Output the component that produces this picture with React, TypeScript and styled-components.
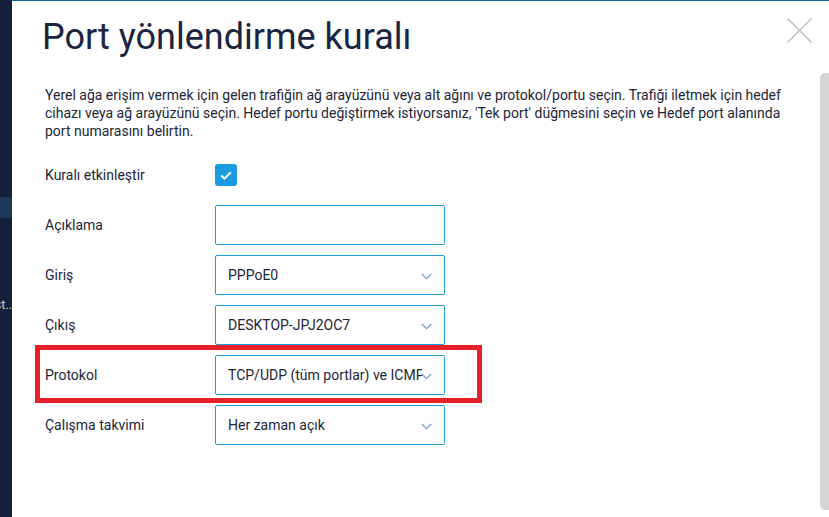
import React from 'react'
import styled, { createGlobalStyle } from 'styled-components'

const GlobalStyle = createGlobalStyle`
  html, body {
    margin: 0;
    padding: 0;
    background: #ffffff;
  }
  body {
    font-family: Roboto, 'Noto Sans', Arial, sans-serif;
    color: #1d2538;
  }
`

const Page = styled.div`
  display: flex;
  width: 829px;
  height: 517px;
  overflow: hidden;
`

const SideNav = styled.div`
  width: 12px;
  flex-shrink: 0;
  background: #14203a;
  display: flex;
  flex-direction: column;
  padding-top: 197px;
  box-sizing: border-box;
`

const NavActive = styled.div`
  height: 21px;
  background: #1b3858;
`

const NavText = styled.div`
  margin-top: 79px;
  display: flex;
  justify-content: flex-end;
  overflow: hidden;
  font-size: 12.5px;
  line-height: 16px;
  color: #cfd4dc;
  white-space: nowrap;
`

const Modal = styled.div`
  position: relative;
  flex: 1;
  display: flex;
  background: #ffffff;
  border-top: 1px solid #0b6a9c;
`

const Content = styled.div`
  flex: 1;
  padding: 13px 0 0 33px;
`

const Title = styled.h1`
  margin: 0 0 25px -3px;
  font-size: 36px;
  line-height: 47px;
  font-weight: 400;
  color: #1a2640;
`

const Intro = styled.p`
  margin: 0 0 15px;
  font-size: 14px;
  line-height: 18px;
  color: #1d2538;
`

const Form = styled.div`
  display: flex;
  flex-direction: column;
  gap: 10px;
`

const Row = styled.div`
  display: flex;
  align-items: center;
  height: 40px;
`

const Label = styled.div`
  width: 170px;
  font-size: 14px;
  color: #1d2538;
`

const Checkbox = styled.div`
  width: 22px;
  height: 22px;
  border-radius: 3px;
  background: #1a9be0;
  display: flex;
  align-items: center;
  justify-content: center;
`

const Field = styled.div`
  position: relative;
  width: 230px;
  height: 40px;
  box-sizing: border-box;
  border: 1px solid #1a9be0;
  border-radius: 2px;
  display: flex;
  align-items: center;
  padding: 0 0 0 12px;
  font-size: 14px;
  color: #1d2538;
  overflow: hidden;
  white-space: nowrap;
`

const FieldValue = styled.span`
  display: block;
  width: 194px;
  overflow: hidden;
`

const Chevron = styled.svg`
  position: absolute;
  right: 12px;
  top: 17px;
`

const CloseButton = styled.div`
  position: absolute;
  top: 17px;
  right: 17px;
  width: 25px;
  height: 25px;
`

const Highlight = styled.div`
  position: absolute;
  left: 23px;
  top: 344px;
  width: 447px;
  height: 58px;
  box-sizing: border-box;
  border: 5px solid #e8202a;
  pointer-events: none;
`

const ScrollTrack = styled.div`
  width: 9px;
  flex-shrink: 0;
  padding-top: 72px;
`

const ScrollThumb = styled.div`
  height: 437px;
  background: #d5d5d5;
  border-radius: 5px 0 0 5px;
`

function Select ({ value }: { value: string }) {
  return (
    <Field>
      <FieldValue>{value}</FieldValue>
      <Chevron width="11" height="7" viewBox="0 0 11 7">
        <path d="M0.8 1 L5.5 5.6 L10.2 1" fill="none" stroke="#7b9bd2" strokeWidth="1.3" />
      </Chevron>
    </Field>
  )
}

const rows = [
  { label: 'Giriş', value: 'PPPoE0' },
  { label: 'Çıkış', value: 'DESKTOP-JPJ2OC7' },
  { label: 'Protokol', value: 'TCP/UDP (tüm portlar) ve ICMP' },
  { label: 'Çalışma takvimi', value: 'Her zaman açık' }
]

export default function App () {
  return (
    <Page>
      <GlobalStyle />
      <SideNav>
        <NavActive />
        <NavText><span>Test..</span></NavText>
      </SideNav>
      <Modal>
        <Content>
          <Title>Port yönlendirme kuralı</Title>
          <Intro>
            Yerel ağa erişim vermek için gelen trafiğin ağ arayüzünü veya alt ağını ve protokol/portu seçin. Trafiği iletmek için hedef
            <br />
            cihazı veya ağ arayüzünü seçin. Hedef portu değiştirmek istiyorsanız, 'Tek port' düğmesini seçin ve Hedef port alanında
            <br />
            port numarasını belirtin.
          </Intro>
          <Form>
            <Row>
              <Label>Kuralı etkinleştir</Label>
              <Checkbox>
                <svg width="12" height="9" viewBox="0 0 12 9">
                  <path d="M1.2 4.6 L4.4 7.6 L10.8 1.2" fill="none" stroke="#ffffff" strokeWidth="2" />
                </svg>
              </Checkbox>
            </Row>
            <Row>
              <Label>Açıklama</Label>
              <Field />
            </Row>
            {rows.map((r) => (
              <Row key={r.label}>
                <Label>{r.label}</Label>
                <Select value={r.value} />
              </Row>
            ))}
          </Form>
        </Content>
        <ScrollTrack>
          <ScrollThumb />
        </ScrollTrack>
        <CloseButton>
          <svg width="25" height="25" viewBox="0 0 25 25">
            <path d="M0.5 0.5 L24.5 24.5 M24.5 0.5 L0.5 24.5" stroke="#b4b8c0" strokeWidth="1.2" />
          </svg>
        </CloseButton>
        <Highlight />
      </Modal>
    </Page>
  )
}
